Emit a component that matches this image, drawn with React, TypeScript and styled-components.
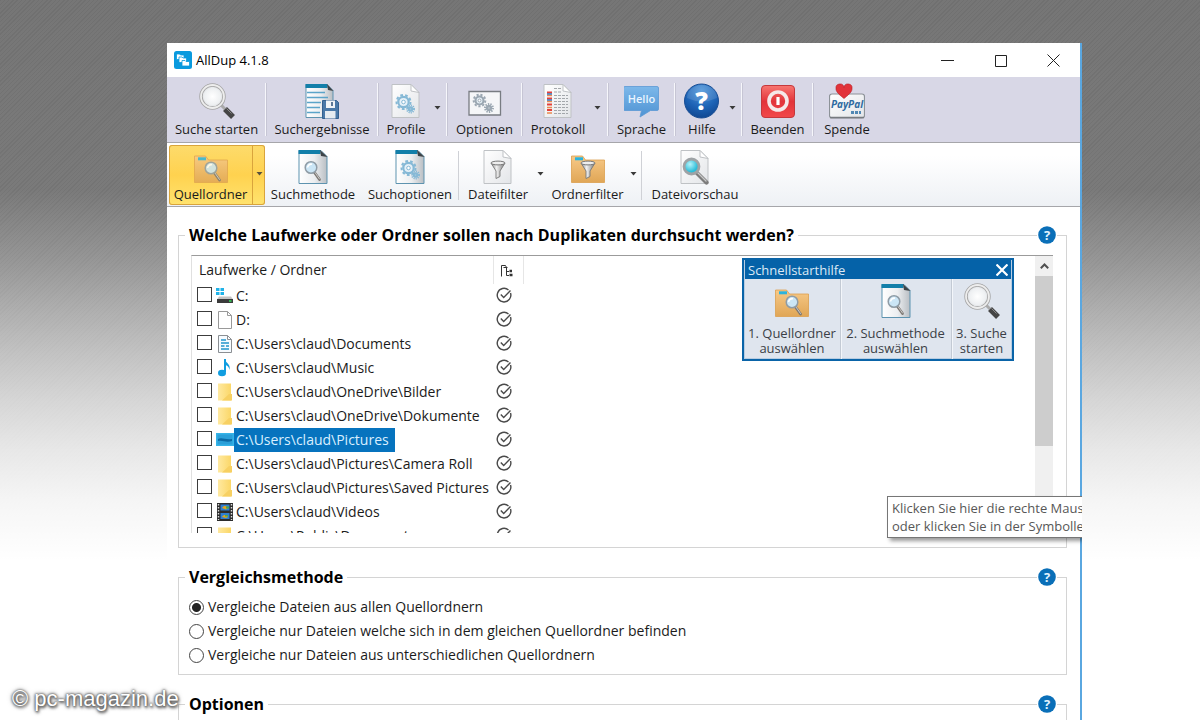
import React from "react";
import styled, { createGlobalStyle, css } from "styled-components";

const GlobalStyle = createGlobalStyle`
  * { box-sizing: border-box; }
  body { margin: 0; background: #fff; color: #1b1b1b; font-family: "Open Sans", "Noto Sans", sans-serif; }
  button, input { font: inherit; color: inherit; margin: 0; }
  svg { display: block; flex: none; }
`;

const Page = styled.div`
  position: relative;
  display: flex;
  height: 100vh;
  overflow: hidden;
  padding: 43px 118px 0 167px;
  background:
    linear-gradient(
      rgba(255, 255, 255, 0) 0, rgba(255, 255, 255, 0.03) 190px, rgba(255, 255, 255, 0.24) 260px,
      rgba(255, 255, 255, 0.4) 305px, rgba(255, 255, 255, 0.55) 350px, rgba(255, 255, 255, 0.7) 400px,
      rgba(255, 255, 255, 0.83) 450px, rgba(255, 255, 255, 0.93) 500px, #fff 560px
    ),
    repeating-linear-gradient(135deg, #707070 0 1px, #767676 1px 3px);
`;

const Window = styled.main`
  position: relative;
  flex: 1;
  min-width: 0;
  height: 900px;
  overflow: hidden;
  padding-right: 2px;
  background: #fff;
  &::after {
    content: "";
    position: absolute;
    top: 0;
    right: 0;
    bottom: 0;
    width: 2px;
    background: #5aa7e0;
  }
`;

const TitleBar = styled.header`
  display: flex;
  align-items: center;
  height: 34px;
  padding: 0 0 0 7px;
  background: #fff;
`;

const AppTitle = styled.h1`
  flex: 1;
  margin: 0 0 0 4px;
  font-size: 13px;
  font-weight: 400;
  line-height: 18px;
  color: #000;
`;

const CaptionButton = styled.button`
  display: grid;
  place-items: center;
  width: 53px;
  height: 32px;
  padding: 0;
  border: 0;
  background: none;
`;

const Toolbar = styled.nav<{ $tone: "lavender" | "light" }>`
  display: flex;
  border-bottom: 1px solid #a6a6aa;
  ${(p) =>
    p.$tone === "lavender"
      ? css`height: 66px; background: #d8d7e6; --divider: #f6f6fb; --edge: #c6c5d4;`
      : css`height: 64px; padding: 2px 0 0 2px; background: linear-gradient(#ffffff 20%, #eef1f5); --divider: #cfd1d6; --edge: transparent;`}
`;

const ToolGroup = styled.div<{ $active?: boolean; $divided?: boolean }>`
  position: relative;
  display: flex;
  ${(p) =>
    p.$active &&
    css`
      height: 60px;
      border-radius: 3px;
      background: linear-gradient(#fddb6c, #ffd24f 50%, #ffe36f);
      box-shadow: inset 0 0 0 1px #d9a43c;
      svg { opacity: 0.85; }
    `}
  ${(p) =>
    p.$divided &&
    css`
      &::after {
        content: "";
        position: absolute;
        right: -1px;
        top: 6px;
        bottom: 6px;
        width: 2px;
        background: linear-gradient(90deg, var(--divider) 50%, var(--edge) 50%);
      }
    `}
`;

const ToolButton = styled.button<{ $width: number }>`
  display: flex;
  flex-direction: column;
  align-items: center;
  gap: 1px;
  width: ${(p) => p.$width}px;
  padding: 6px 0 0;
  border: 0;
  background: none;
  font-size: 13px;
  line-height: 18px;
  white-space: nowrap;
  ${Toolbar}:nth-of-type(2) & { padding-top: 4px; gap: 0; }
`;

const ArrowButton = styled.button<{ $width: number; $boxed?: boolean }>`
  display: flex;
  align-items: center;
  width: ${(p) => p.$width}px;
  padding: 0 0 3px;
  border: 0;
  background: none;
  ${(p) => p.$boxed && css`padding-left: 3px; border-left: 1px solid #d9a43c;`}
`;

const Panels = styled.div`
  display: flex;
  flex-direction: column;
  gap: 19px;
  padding: 18px 13px 0 11px;
`;

const Panel = styled.section`
  position: relative;
`;

const Group = styled.fieldset<{ $top: number; $bottom: number }>`
  min-width: 0;
  margin: 0;
  padding: ${(p) => p.$top}px 13px ${(p) => p.$bottom}px 10px;
  border: 1px solid #d4d4d4;
`;

const Legend = styled.legend`
  margin-left: -4px;
  padding: 0 4px;
  font-size: 16px;
  font-weight: 700;
  line-height: 20px;
  color: #000;
`;

const HelpButton = styled.button`
  position: absolute;
  top: 1px;
  right: 10px;
  padding: 0 1px;
  border: 0;
  background: #fff;
`;

const ListBox = styled.div`
  position: relative;
  display: flex;
  height: 278px;
  margin-left: 2px;
  border-top: 1px solid #9b9b9b;
  border-left: 1px solid #e0e0e0;
`;

const ListView = styled.div`
  flex: 1;
  min-width: 0;
  overflow: hidden;
`;

const Table = styled.table`
  width: 100%;
  table-layout: fixed;
  border-collapse: collapse;
  font-size: 14px;
  line-height: 20px;
  th { height: 28px; padding: 0 7px; border-right: 1px solid #e6e6e6; text-align: left; font-weight: 400; }
  th:nth-child(2) { padding: 0 0 0 6px; }
  th:last-child { border: 0; }
  td { height: 24px; padding: 0; }
  td:nth-child(2) { padding: 0 0 2px 3px; }
`;

const NameColumn = styled.col`
  width: 301px;
`;
const DepthColumn = styled.col`
  width: 30px;
`;

const Entry = styled.label`
  display: flex;
  align-items: center;
  height: 24px;
  padding-left: 5px;
  gap: 4px;
`;

const EntryName = styled.span<{ $selected?: boolean }>`
  height: 24px;
  margin-left: -4px;
  padding: 2px 6px 0 2px;
  white-space: nowrap;
  ${(p) => p.$selected && css`background: #0673be; color: #d9efff;`}
`;

const Tick = styled.input`
  appearance: none;
  flex: none;
  width: 15px;
  height: 15px;
  border: 1px solid #3c3c3c;
  background: #fff;
  ${Entry} & { margin-bottom: 3px; }
`;

const ScrollBar = styled.div`
  display: flex;
  flex-direction: column;
  width: 18px;
  background: #f0f0f0;
`;
const ScrollUp = styled.button`
  display: grid;
  place-items: center;
  height: 20px;
  padding: 0;
  border: 0;
  background: none;
`;
const ScrollThumb = styled.div`
  height: 170px;
  background: #cdcdcd;
`;

const QuickStart = styled.aside`
  position: absolute;
  top: 2px;
  right: 39px;
  width: 272px;
  border: 2px solid #0a64a8;
  background: #dfe5ee;
  box-shadow: inset 0 0 0 1px #b8cde2;
`;
const QuickTitle = styled.h2`
  display: flex;
  align-items: center;
  justify-content: space-between;
  height: 19px;
  margin: 0 1px;
  padding: 1px 3px 0 3px;
  background: #0562a8;
  color: #dbe9f5;
  font-size: 13px;
  font-weight: 400;
  line-height: 16px;
`;
const QuickClose = styled.button`
  padding: 0;
  border: 0;
  background: none;
`;
const QuickSteps = styled.div`
  display: flex;
  height: 80px;
`;
const QuickStep = styled.button<{ $grow: number }>`
  display: flex;
  flex: ${(p) => p.$grow} 0 0;
  flex-direction: column;
  align-items: center;
  gap: 7px;
  min-width: 0;
  padding: 4px 0 0;
  border: 0;
  background: none;
  color: #3b3f46;
  font-size: 13px;
  line-height: 15px;
  white-space: nowrap;
  & + & { box-shadow: inset 1px 0 0 #c3cad4, inset 2px 0 0 #f3f6fa; }
`;

const Tooltip = styled.div`
  position: absolute;
  z-index: 1;
  top: 453px;
  right: 0;
  width: 195px;
  padding: 2px 0 2px 4px;
  overflow: hidden;
  border: 1px solid #767676;
  border-right: 0;
  background: #fff;
  box-shadow: 3px 3px 4px rgba(0, 0, 0, 0.4);
  color: #575757;
  font-size: 13px;
  line-height: 18px;
  white-space: nowrap;
`;

const Choice = styled.label`
  display: flex;
  align-items: center;
  gap: 4px;
  height: 24px;
  font-size: 14px;
  line-height: 20px;
`;
const Radio = styled.input`
  appearance: none;
  flex: none;
  width: 15px;
  height: 15px;
  border: 1px solid #444;
  border-radius: 50%;
  background: #fff;
  &:checked { background: radial-gradient(circle, #222 0 4px, #fff 5px); }
`;

const Watermark = styled.div`
  position: absolute;
  left: 12px;
  bottom: 9px;
  color: #fff;
  font-family: "Liberation Sans", Arial, sans-serif;
  font-size: 22px;
  line-height: 24px;
  text-shadow: 0 0 2px #555, 0 0 3px #666, 1px 2px 3px #555, 0 0 5px #777;
`;

/* ---------- drawings ---------- */

const Defs = styled.svg`
  position: absolute;
  width: 0;
  height: 0;
`;

const Gradients = () => (
  <Defs aria-hidden>
    <defs>
      <linearGradient id="paper" x1="0" y1="0" x2="1" y2="1">
        <stop offset="0" stopColor="#fff" />
        <stop offset="1" stopColor="#e3e5e8" />
      </linearGradient>
      <linearGradient id="sheet" x1="0" y1="0" x2="1" y2="0">
        <stop offset="0" stopColor="#fff" />
        <stop offset="0.55" stopColor="#eceef0" />
        <stop offset="1" stopColor="#b9bec3" />
      </linearGradient>
      <linearGradient id="folder" x1="0" y1="0" x2="0" y2="1">
        <stop offset="0" stopColor="#f7c987" />
        <stop offset="1" stopColor="#e0a656" />
      </linearGradient>
      <linearGradient id="yellow" x1="0" y1="0" x2="1" y2="0">
        <stop offset="0" stopColor="#ffe9a0" />
        <stop offset="1" stopColor="#fbd768" />
      </linearGradient>
      <linearGradient id="bubble" x1="0" y1="0" x2="0" y2="1">
        <stop offset="0" stopColor="#7db8ea" />
        <stop offset="1" stopColor="#4f93d3" />
      </linearGradient>
      <linearGradient id="red" x1="0" y1="0" x2="0" y2="1">
        <stop offset="0" stopColor="#f87570" />
        <stop offset="0.5" stopColor="#e2343a" />
        <stop offset="1" stopColor="#f2484a" />
      </linearGradient>
      <radialGradient id="help" cx="0.5" cy="0.2" r="0.9">
        <stop offset="0" stopColor="#4d95da" />
        <stop offset="0.55" stopColor="#1c62b5" />
        <stop offset="1" stopColor="#0d3f86" />
      </radialGradient>
      <radialGradient id="lens">
        <stop offset="0" stopColor="#fff" />
        <stop offset="0.7" stopColor="#eef0f2" />
        <stop offset="1" stopColor="#d6d8db" />
      </radialGradient>
      <radialGradient id="aqua" cx="0.4" cy="0.35">
        <stop offset="0" stopColor="#b6f4fb" />
        <stop offset="1" stopColor="#2cbdd9" />
      </radialGradient>
      <linearGradient id="metal" x1="0" y1="0" x2="1" y2="0">
        <stop offset="0" stopColor="#8b8b8b" />
        <stop offset="0.4" stopColor="#f1f1f1" />
        <stop offset="1" stopColor="#777" />
      </linearGradient>
      <linearGradient id="wave" x1="0" y1="0" x2="1" y2="0">
        <stop offset="0" stopColor="#a9c8e0" />
        <stop offset="1" stopColor="#17538f" />
      </linearGradient>
    </defs>
  </Defs>
);

const Icon = ({ children }: { children: React.ReactNode }) => (
  <svg width="36" height="36" viewBox="0 0 36 36" fill="none" aria-hidden>
    {children}
  </svg>
);

const Gear = ({ x, y, r, color = "#86b9d6" }: { x: number; y: number; r: number; color?: string }) => (
  <g transform={`translate(${x} ${y})`} stroke={color}>
    <circle r={r + 1} strokeWidth="2" strokeDasharray={`${r * 0.45} ${r * 0.37}`} />
    <circle r={r - 0.8} strokeWidth="2.2" fill="#e6f1f8" />
    <circle r={r * 0.3} strokeWidth="1" fill="#fff" />
  </g>
);

const SmallLens = ({ x, y }: { x: number; y: number }) => (
  <g transform={`translate(${x} ${y})`}>
    <path d="M3.500 5 8.500 12" stroke="#7d7873" strokeWidth="2.800" strokeLinecap="round" />
    <path d="M4 5 8.500 11.500" stroke="#c9c9c9" strokeWidth="1" strokeLinecap="round" />
    <circle r="5.800" fill="#cbe6f6" stroke="#8f9ca6" strokeWidth="1.500" />
    <path d="M-3.400 0A3.600 3.600 0 0 1 1-3.300" stroke="#fff" strokeWidth="1.600" />
  </g>
);

const FolderBase = () => (
  <>
    <path d="M1.500 7h11l3 4h19v22.500h-33z" fill="url(#folder)" stroke="#dca04e" strokeWidth="0.800" />
    <path d="M5 9.800h8" stroke="#2bb3dd" strokeWidth="3" />
  </>
);

const BluePage = () => (
  <>
    <path d="M4 1.500h22l6 6V34.500H4z" fill="url(#sheet)" stroke="#5d93af" />
    <path d="M3.500 1h22v4h-22z" fill="#137fa9" />
    <path d="M25 1 32.500 8 26 7z" fill="#3e4448" />
  </>
);

const BlankPage = () => (
  <>
    <path d="M4 1.500h19l8 8V34.500H4z" fill="url(#paper)" stroke="#bfc2c5" />
    <path d="M23 1.500v6.500l8 1.500z" fill="#fff" stroke="#bfc2c5" />
  </>
);

const Funnel = ({ x, y }: { x: number; y: number }) => (
  <g transform={`translate(${x} ${y})`}>
    <path d="M-7-6 -2 2v7.500l4-2V2l5-8z" fill="url(#metal)" stroke="#777" strokeWidth="0.900" strokeLinejoin="round" />
    <ellipse cx="0" cy="-6" rx="7" ry="1.900" fill="#eee" stroke="#777" strokeWidth="1" />
  </g>
);

const MagnifierIcon = () => (
  <Icon>
    <path d="m22 22 4 4" stroke="#aaa" strokeWidth="3" />
    <path d="m26 26 8 8" stroke="#454545" strokeWidth="5.500" />
    <path d="m27.500 25.500 5 5" stroke="#8a8a8a" strokeWidth="1" />
    <circle cx="13.500" cy="13.500" r="11.500" fill="url(#lens)" stroke="#a4a4a4" strokeWidth="3.400" />
    <circle cx="13.500" cy="13.500" r="11.500" stroke="#ededed" strokeWidth="1.800" />
  </Icon>
);

const ResultsIcon = () => (
  <Icon>
    <path d="M2 1.500h21l6 6V34.500H2z" fill="url(#sheet)" stroke="#5d93af" />
    <path d="M1.500 1h22v4h-22z" fill="#137fa9" />
    <path d="M23 1 29.500 8 24 7z" fill="#3e4448" />
    <path d="M3 9.500h18M3 14.500h21M3 19.500h14M3 24.500h13M3 29.500h13" stroke="#5ba4c9" strokeWidth="1.600" />
    <path d="M18.500 17.500h14l2 2V35.500h-16z" fill="#4b79a8" stroke="#34608f" />
    <path d="M22 17.500h9V25h-9z" fill="#f1f4f7" />
    <path d="M28 19v4" stroke="#2d5079" strokeWidth="1.500" />
    <path d="M21 28h10.500v7.500H21z" fill="#e6ebf0" />
  </Icon>
);

const ProfileIcon = () => (
  <Icon>
    <BlankPage />
    <Gear x={15.5} y={19} r={6} />
    <Gear x={22.5} y={26} r={2.5} />
  </Icon>
);

const OptionsIcon = () => (
  <Icon>
    <path d="M2 8.500h31.500v23.500H2z" fill="#f5f6f8" stroke="#787c82" strokeWidth="1.300" />
    <Gear x={12.5} y={17.5} r={4.8} color="#9ba7b2" />
    <Gear x={22} y={25} r={3} color="#9ba7b2" />
  </Icon>
);

const LogIcon = () => (
  <Icon>
    <BlankPage />
    <path d="M7 9.500h5M7 15.500h5M7 21.500h5M7 27h5" stroke="#e5403a" strokeWidth="2" />
    <path d="M7 12.500h5M7 18.500h5M7 24.500h5M7 30h5" stroke="#e98a50" strokeWidth="1.600" />
    <path d="M7 17h5M7 11h5" stroke="#3a78c0" strokeWidth="1.400" />
    <path d="M14 5.500h8M14 9h8M14 12.500h14M14 15.500h14M14 18.500h14M14 21.500h14M14 24.500h14M14 27.500h14M14 30.500h14" stroke="#a3a7ab" strokeWidth="1.200" strokeDasharray="3 1" />
  </Icon>
);

const HelloIcon = () => (
  <Icon>
    <path d="M1 3.500h32q1.500 0 1.500 1.500v21q0 1.500-1.500 1.500h-6.500L16 34l1.500-6.500H1Q-.5 27.500-.5 26V5Q-.5 3.500 1 3.500z" fill="url(#bubble)" stroke="#5a98d4" strokeWidth="0.800" />
    <text x="17.500" y="20" textAnchor="middle" fontSize="11" fontWeight="600" fill="#eaf5ff">Hello</text>
  </Icon>
);

const HelpIcon = () => (
  <Icon>
    <circle cx="17.500" cy="18" r="17" fill="url(#help)" stroke="#1b4f95" />
    <path d="M3 15a15 13 0 0 1 30 0q-15 7-30 0z" fill="#fff" opacity="0.12" />
    <text x="17.500" y="27" textAnchor="middle" fontSize="25" fontWeight="800" fill="#fff">?</text>
  </Icon>
);

const ExitIcon = () => (
  <Icon>
    <rect x="1.500" y="2.500" width="33" height="32" rx="3.500" fill="url(#red)" stroke="#c5383c" />
    <circle cx="18" cy="18" r="9" stroke="#f5e9e9" strokeWidth="3.600" />
    <path d="M18 14v8" stroke="#fff" strokeWidth="3.200" />
  </Icon>
);

const DonateIcon = () => (
  <Icon>
    <rect x="0.500" y="11" width="35" height="24" rx="2.500" fill="url(#paper)" stroke="#8d9298" strokeWidth="1.200" />
    <path d="M1 34.500h34" stroke="#777b80" strokeWidth="1.500" />
    <path d="M15 15.500C8 10 7 8 7 5.500A4 4 0 0 1 15 4.500 4 4 0 0 1 23 5.500C23 8 22 10 15 15.500z" fill="#e2333a" stroke="#b5161d" strokeWidth="0.600" />
    <text x="18" y="24.500" textAnchor="middle" fontSize="10" fontWeight="700" fontStyle="italic" fill="#2f6ba0">PayPal</text>
    <path d="M4 29.500h17" stroke="url(#wave)" strokeWidth="3.200" />
    <path d="M22 29.500h10" stroke="#5188b4" strokeWidth="3" strokeDasharray="3 1" />
  </Icon>
);

const SourceFolderIcon = () => (
  <Icon>
    <FolderBase />
    <SmallLens x={18} y={19} />
  </Icon>
);
const MethodIcon = () => (
  <Icon>
    <BluePage />
    <SmallLens x={16} y={18.5} />
  </Icon>
);
const SearchOptionsIcon = () => (
  <Icon>
    <BluePage />
    <Gear x={16.5} y={19} r={6} />
    <Gear x={23.5} y={26} r={2.5} />
  </Icon>
);
const FileFilterIcon = () => (
  <Icon>
    <BlankPage />
    <Funnel x={18} y={20} />
  </Icon>
);
const FolderFilterIcon = () => (
  <Icon>
    <FolderBase />
    <Funnel x={18} y={20} />
  </Icon>
);
const PreviewIcon = () => (
  <Icon>
    <BlankPage />
    <path d="m20 24 9.500 9.500" stroke="#7c7c7c" strokeWidth="4.200" strokeLinecap="round" />
    <path d="m21 24 8 8" stroke="#c8c8c8" strokeWidth="1.300" strokeLinecap="round" />
    <circle cx="14.500" cy="17.500" r="7.500" fill="url(#aqua)" stroke="#9ea3a6" strokeWidth="2.800" />
  </Icon>
);

const DownArrow = () => (
  <svg width="7" height="4" viewBox="0 0 7 4" aria-hidden>
    <path d="M0.500 0h6L3.500 3.500z" fill="#3a3a3a" />
  </svg>
);

const AppLogo = () => (
  <svg width="18" height="18" viewBox="0 0 18 18" aria-hidden>
    <rect width="18" height="18" rx="2.500" fill="#0a9ade" />
    <g fill="#fff" stroke="#0a9ade" strokeWidth="0.800">
      <path d="M2.500 3h3l1 1H10v4.500H2.500z" />
      <path d="M5 6h3l1 1h3.500v4.500H5z" />
      <path d="M8 9.500h3l1 1h3.500V15H8z" />
    </g>
  </svg>
);

const HelpBadge = () => (
  <svg width="18" height="18" viewBox="0 0 18 18" aria-hidden>
    <circle cx="9" cy="9" r="8.800" fill="#0a6fb8" />
    <text x="9" y="14" textAnchor="middle" fontSize="13" fontWeight="700" fill="#e3f3ff">?</text>
  </svg>
);

const CheckMark = () => (
  <svg width="16" height="16" viewBox="0 0 16 16" fill="none" stroke="#4a4a4a" strokeWidth="1.400" aria-hidden>
    <path d="M12.500 3A6.800 6.800 0 1 0 14.500 6" />
    <path d="m4.800 7.500 2.900 3L14.500 3.500" />
  </svg>
);

const TreeGlyph = () => (
  <svg width="13" height="13" viewBox="0 0 13 13" fill="none" stroke="#333" aria-hidden>
    <path d="M1.500 12.500v-11h4l1 2M3.500 3.500h4" />
    <path d="M6.500 4v7.500H9M6.500 7.500H9" />
    <path d="M9.500 7h2.500M9.500 11h3" strokeWidth="2.600" />
  </svg>
);

type Kind = "drive" | "page" | "documents" | "music" | "folder" | "pictures" | "videos";

const entryArt: Record<Kind, React.ReactNode> = {
  drive: (
    <>
      <path d="M0 1h3.500v3H0zM4.500 1H8v3H4.500zM0 5h3.500v3H0zM4.500 5H8v3H4.500z" fill="#1fb2e8" />
      <path d="M3 9.500h12l2 3H1z" fill="#c2c2c2" />
      <path d="M1 12h16v4H1z" fill="#3b3b3b" />
      <path d="M13 14h2.500" stroke="#34e05a" strokeWidth="1.500" />
    </>
  ),
  page: <path d="M2.500.5h9l4 4v13h-13zM11.500.5v4h4" fill="#fff" stroke="#999" />,
  documents: (
    <>
      <path d="M2.500.5h9l4 4v13h-13zM11.500.5v4h4" fill="#f6fbff" stroke="#8b8f93" />
      <path d="M5 5h5M5 8h8M5 11h3.500M10 11h3M5 14h8" stroke="#2395cc" strokeWidth="1.700" />
    </>
  ),
  music: (
    <>
      <path d="M9 0v13" stroke="#109de0" strokeWidth="2" />
      <path d="M9 0c0 4 6 4.500 4.500 11C13 8 11.500 6.500 9 6z" fill="#109de0" />
      <ellipse cx="6" cy="14" rx="4" ry="3.200" fill="#109de0" />
    </>
  ),
  folder: (
    <>
      <path d="M2 .5h13v17H2z" fill="url(#yellow)" />
      <path d="M13 11h3v6.500H6z" fill="#f7d062" />
    </>
  ),
  pictures: (
    <>
      <path d="M0 2h18v13H0z" fill="#35b4e8" />
      <path d="M1.500 3.500h15v10h-15z" fill="#2a9fd8" />
      <path d="M2 8c4-2 7 1 14 0v2c-6 2-9-1-14 0z" fill="#0b6aa5" />
    </>
  ),
  videos: (
    <>
      <path d="M1 0h16v18H1z" fill="#2d2d2d" />
      <path d="M2.500 1v16M15.500 1v16" stroke="#ddd" strokeWidth="1.400" strokeDasharray="1.500 1.500" />
      <path d="M4.500 1.500h9v6h-9zM4.500 10h9v6h-9z" fill="#2f7fd2" />
      <path d="M6 5c2-3 5-2 6 0l-2 1.500zM6 14c2-3 5-2 6 0l-2 1z" fill="#e2a321" />
      <path d="M10 3.500h3v2h-3zM9 12h3v1.500H9z" fill="#4aa84a" />
    </>
  ),
};

/* ---------- content ---------- */

type Tool = {
  label: string;
  icon: React.ReactNode;
  width: number;
  menu?: number;
  divided?: boolean;
  active?: boolean;
};

const mainTools: Tool[] = [
  { label: "Suche starten", icon: <MagnifierIcon />, width: 99, divided: true },
  { label: "Suchergebnisse", icon: <ResultsIcon />, width: 112, divided: true },
  { label: "Profile", icon: <ProfileIcon />, width: 56, menu: 13, divided: true },
  { label: "Optionen", icon: <OptionsIcon />, width: 75, divided: true },
  { label: "Protokoll", icon: <LogIcon />, width: 72, menu: 14, divided: true },
  { label: "Sprache", icon: <HelloIcon />, width: 67, divided: true },
  { label: "Hilfe", icon: <HelpIcon />, width: 54, menu: 13, divided: true },
  { label: "Beenden", icon: <ExitIcon />, width: 71, divided: true },
  { label: "Spende", icon: <DonateIcon />, width: 68 },
];

const searchTools: Tool[] = [
  { label: "Quellordner", icon: <SourceFolderIcon />, width: 83, menu: 13, active: true },
  { label: "Suchmethode", icon: <MethodIcon />, width: 96 },
  { label: "Suchoptionen", icon: <SearchOptionsIcon />, width: 98, divided: true },
  { label: "Dateifilter", icon: <FileFilterIcon />, width: 78, menu: 8 },
  { label: "Ordnerfilter", icon: <FolderFilterIcon />, width: 85, menu: 12, divided: true },
  { label: "Dateivorschau", icon: <PreviewIcon />, width: 106 },
];

const entries: { path: string; kind: Kind; selected?: boolean }[] = [
  { path: "C:", kind: "drive" },
  { path: "D:", kind: "page" },
  { path: "C:\\Users\\claud\\Documents", kind: "documents" },
  { path: "C:\\Users\\claud\\Music", kind: "music" },
  { path: "C:\\Users\\claud\\OneDrive\\Bilder", kind: "folder" },
  { path: "C:\\Users\\claud\\OneDrive\\Dokumente", kind: "folder" },
  { path: "C:\\Users\\claud\\Pictures", kind: "pictures", selected: true },
  { path: "C:\\Users\\claud\\Pictures\\Camera Roll", kind: "folder" },
  { path: "C:\\Users\\claud\\Pictures\\Saved Pictures", kind: "folder" },
  { path: "C:\\Users\\claud\\Videos", kind: "videos" },
  { path: "C:\\Users\\Public\\Documents", kind: "folder" },
];

const methods = [
  "Vergleiche Dateien aus allen Quellordnern",
  "Vergleiche nur Dateien welche sich in dem gleichen Quellordner befinden",
  "Vergleiche nur Dateien aus unterschiedlichen Quellordnern",
];

const Tools = ({ tools }: { tools: Tool[] }) => (
  <>
    {tools.map((t) => (
      <ToolGroup key={t.label} $active={t.active} $divided={t.divided}>
        <ToolButton type="button" $width={t.width}>
          {t.icon}
          {t.label}
        </ToolButton>
        {t.menu && (
          <ArrowButton type="button" $width={t.menu} $boxed={t.active} aria-label={`${t.label} Menü`}>
            <DownArrow />
          </ArrowButton>
        )}
      </ToolGroup>
    ))}
  </>
);

const GroupPanel = (p: { title: string; top: number; bottom: number; children?: React.ReactNode }) => (
  <Panel>
    <Group $top={p.top} $bottom={p.bottom}>
      <Legend>{p.title}</Legend>
      {p.children}
    </Group>
    <HelpButton type="button" aria-label={`Hilfe: ${p.title}`}>
      <HelpBadge />
    </HelpButton>
  </Panel>
);

export default function App() {
  return (
    <Page>
      <GlobalStyle />
      <Gradients />
      <Window>
        <TitleBar>
          <AppLogo />
          <AppTitle>AllDup 4.1.8</AppTitle>
          <CaptionButton type="button" aria-label="Minimieren">
            <svg width="13" height="13" viewBox="0 0 13 13" stroke="#222"><path d="M0 6.500h13" /></svg>
          </CaptionButton>
          <CaptionButton type="button" aria-label="Maximieren">
            <svg width="13" height="13" viewBox="0 0 13 13" stroke="#222" fill="none"><path d="M1.500 1.500h11v11h-11z" /></svg>
          </CaptionButton>
          <CaptionButton type="button" aria-label="Schließen">
            <svg width="13" height="13" viewBox="0 0 13 13" stroke="#222"><path d="m.5.5 12 12M12.500.5l-12 12" /></svg>
          </CaptionButton>
        </TitleBar>
        <Toolbar $tone="lavender"><Tools tools={mainTools} /></Toolbar>
        <Toolbar $tone="light"><Tools tools={searchTools} /></Toolbar>
        <Panels>
          <GroupPanel title="Welche Laufwerke oder Ordner sollen nach Duplikaten durchsucht werden?" top={10} bottom={14}>
            <ListBox>
              <ListView>
                <Table>
                  <colgroup>
                    <NameColumn />
                    <DepthColumn />
                    <col />
                  </colgroup>
                  <thead>
                    <tr>
                      <th>Laufwerke / Ordner</th>
                      <th aria-label="Unterordner"><TreeGlyph /></th>
                      <th />
                    </tr>
                  </thead>
                  <tbody>
                    {entries.map((e) => (
                      <tr key={e.path}>
                        <td>
                          <Entry>
                            <Tick type="checkbox" />
                            <svg width="18" height="18" viewBox="0 0 18 18" fill="none" aria-hidden>{entryArt[e.kind]}</svg>
                            <EntryName $selected={e.selected}>{e.path}</EntryName>
                          </Entry>
                        </td>
                        <td><CheckMark /></td>
                        <td />
                      </tr>
                    ))}
                  </tbody>
                </Table>
              </ListView>
              <ScrollBar>
                <ScrollUp type="button" aria-label="Nach oben">
                  <svg width="9" height="6" viewBox="0 0 9 6" fill="none" stroke="#505050" strokeWidth="2"><path d="M.8 5.200 4.500 1.500l3.700 3.700" /></svg>
                </ScrollUp>
                <ScrollThumb />
              </ScrollBar>
              <QuickStart>
                <QuickTitle>
                  Schnellstarthilfe
                  <QuickClose type="button" aria-label="Schließen">
                    <svg width="12" height="12" viewBox="0 0 12 12" stroke="#fff" strokeWidth="2.200"><path d="m.5.5 11 11M11.500.5l-11 11" /></svg>
                  </QuickClose>
                </QuickTitle>
                <QuickSteps>
                  <QuickStep type="button" $grow={96}><SourceFolderIcon /><span>1. Quellordner<br />auswählen</span></QuickStep>
                  <QuickStep type="button" $grow={111}><MethodIcon /><span>2. Suchmethode<br />auswählen</span></QuickStep>
                  <QuickStep type="button" $grow={61}><MagnifierIcon /><span>3. Suche<br />starten</span></QuickStep>
                </QuickSteps>
              </QuickStart>
            </ListBox>
          </GroupPanel>
          <GroupPanel title="Vergleichsmethode" top={8} bottom={7}>
            {methods.map((m, i) => (
              <Choice key={m}>
                <Radio type="radio" name="method" defaultChecked={i === 0} />
                {m}
              </Choice>
            ))}
          </GroupPanel>
          <GroupPanel title="Optionen" top={8} bottom={80} />
        </Panels>
        <Tooltip role="tooltip">
          Klicken Sie hier die rechte Maus<br />
          oder klicken Sie in der Symbolle
        </Tooltip>
      </Window>
      <Watermark>© pc-magazin.de</Watermark>
    </Page>
  );
}
